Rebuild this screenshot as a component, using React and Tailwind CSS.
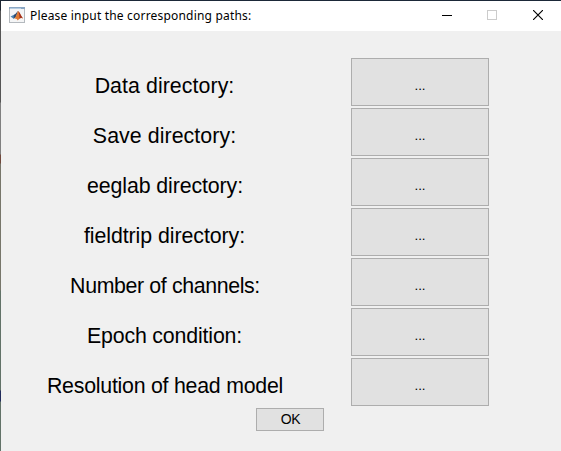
const rows = [
  { label: 'Data directory:', tracking: 'tracking-[0.07px]', shift: 'pr-px' },
  { label: 'Save directory:', tracking: 'tracking-[0.07px]', shift: 'pr-px' },
  { label: 'eeglab directory:', tracking: 'tracking-[-0.1px]', shift: '' },
  { label: 'fieldtrip directory:', tracking: 'tracking-[-0.06px]', shift: 'pr-px' },
  { label: 'Number of channels:', tracking: 'tracking-[-0.37px]', shift: '' },
  { label: 'Epoch condition:', tracking: 'tracking-[-0.16px]', shift: 'pr-px' },
  { label: 'Resolution of head model', tracking: 'tracking-[-0.24px]', shift: '' },
];

function MatlabIcon() {
  return (
    <svg width="16" height="16" viewBox="0 0 16 16" className="block">
      <rect x="0.5" y="0.5" width="15" height="15" fill="#f4f5f6" stroke="#b4b9be" />
      <rect x="0" y="0" width="16" height="2" fill="#8aa7c4" />
      <rect x="1" y="1" width="11" height="1" fill="#b5cce2" />
      <path d="M1.5 9.5 5 7.7l2.2 1.7-2.6 2.4z" fill="#4c86b4" />
      <path d="M5 7.7C7 7.3 7.8 4.5 9 4L7.2 9.4 4.6 11.8z" fill="#304c70" />
      <path d="M9 4C10.5 4.8 11.8 8.8 14.2 11.6c-1.8-1.3-3.4-.8-5.5 1.9C8 12 6.8 11.1 4.6 11.8 7.4 10.4 8 6 9 4z" fill="#e07a32" />
      <path d="M9.2 4c1.5.8 2.5 4.8 5 7.6-1.5-1-2.5-1-3.6-.2C10.6 8.5 10 6 9.2 4z" fill="#9f2f20" />
    </svg>
  );
}

function WindowControls() {
  return (
    <div className="ml-auto flex h-[28px]">
      <button aria-label="Minimize" className="flex w-[44px] items-center justify-center">
        <svg width="10" height="10" shapeRendering="crispEdges">
          <path d="M0 5.5h10" stroke="#000" />
        </svg>
      </button>
      <button aria-label="Maximize" className="flex w-[46px] items-center justify-center">
        <svg width="10" height="10" shapeRendering="crispEdges">
          <rect x="0.5" y="0.5" width="9" height="9" fill="none" stroke="#ccc" />
        </svg>
      </button>
      <button aria-label="Close" className="flex w-[46px] items-center justify-center">
        <svg width="10" height="10">
          <path d="M0 0l10 10M10 0L0 10" stroke="#000" strokeWidth="1.15" />
        </svg>
      </button>
    </div>
  );
}

export default function App() {
  return (
    <div className="flex h-[451px] w-[561px] overflow-hidden bg-[#f0f0f0] font-['Liberation_Sans',Arial,sans-serif] text-black">
      <div className="w-px shrink-0 bg-[linear-gradient(to_bottom,#1b2430_0px,#1b2430_10px,#555_11px,#555_102px,#808080_103px,#808080_154px,#70483c_155px,#70483c_163px,#77766a_164px,#77766a_290px,#627268_291px,#627268_390px,#222c5c_391px,#222c5c_401px,#627268_402px,#627268_451px)]" />
      <div className="flex flex-1 flex-col">
        <div className="flex h-[31px] border-t border-[#1b2838] bg-white pl-2">
          <div className="pt-[6px]">
            <MatlabIcon />
          </div>
          <span className="ml-[5px] whitespace-nowrap font-['Noto_Sans',sans-serif] text-[12px] leading-[30px] tracking-[0.19px]">
            Please input the corresponding paths:
          </span>
          <WindowControls />
        </div>
        <div className="flex flex-col gap-[2px] pt-[27px]">
          {rows.map(({ label, tracking, shift }) => (
            <div key={label} className="flex h-12">
              <div className={`ml-[34px] mr-[56px] w-[260px] pt-[13px] text-center text-[21.33px] leading-[30px] ${shift}`}>
                <span className={`whitespace-nowrap ${tracking}`}>{label}</span>
              </div>
              <button className="h-12 w-[138px] border border-[#adadad] bg-[#e1e1e1] pt-[7px] text-center text-[13.33px]">
                ...
              </button>
            </div>
          ))}
        </div>
        <button className="ml-[255px] mt-[2px] h-[23px] w-[68px] border border-[#adadad] bg-[#e1e1e1] pl-px text-[14px] leading-[21px] tracking-[-0.4px]">
          OK
        </button>
      </div>
    </div>
  );
}
